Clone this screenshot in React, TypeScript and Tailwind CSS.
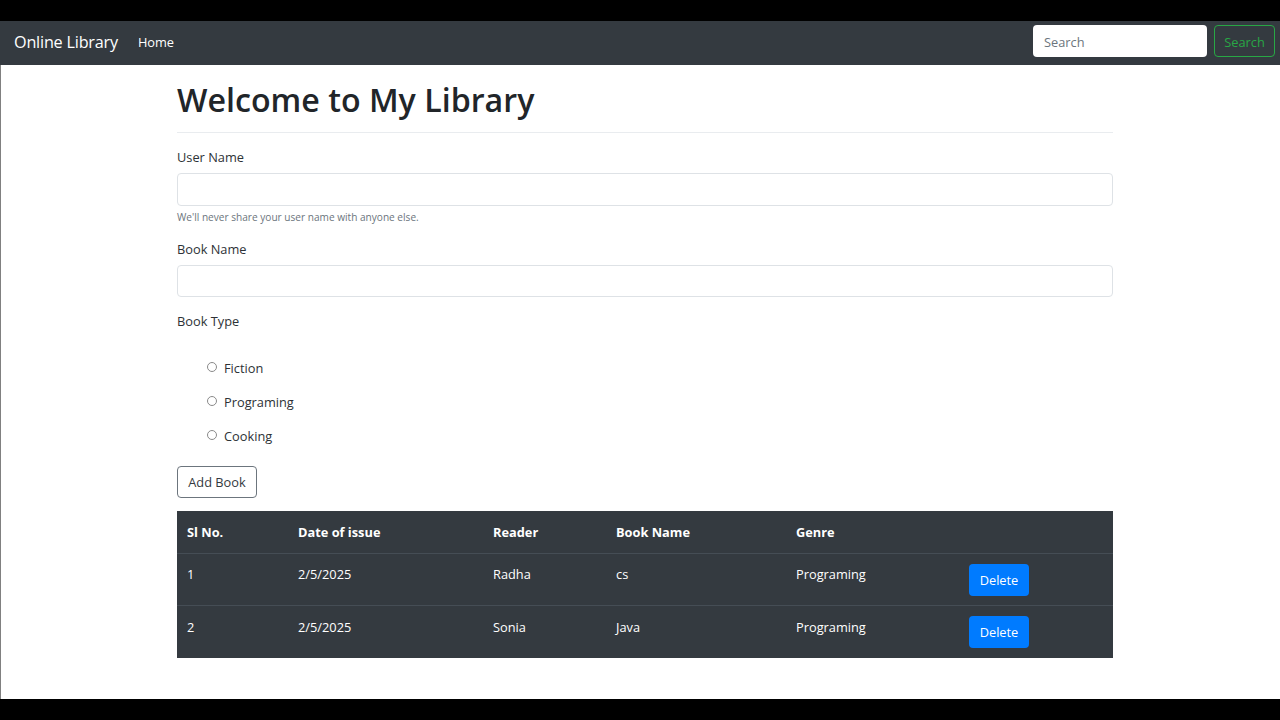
import React from 'react';

const books = [
  { id: 1, date: '2/5/2025', reader: 'Radha', name: 'cs', genre: 'Programing' },
  { id: 2, date: '2/5/2025', reader: 'Sonia', name: 'Java', genre: 'Programing' },
];

const types = ['Fiction', 'Programing', 'Cooking'];

const App: React.FC = () => {
  return (
    <div className="w-[1280px] h-[720px] overflow-hidden bg-black flex flex-col pt-[21px] pb-[21px] font-['Open_Sans','Noto_Sans',sans-serif] text-[#2d3236]">
      {/* Navbar */}
      <nav className="h-[44px] shrink-0 bg-[#343a40] flex items-center pl-[14px] pr-[5px]">
        <span className="text-[16.2px] text-white mr-[20px] mb-[2px] tracking-[-0.2px]">Online Library</span>
        <span className="text-[12.8px] text-white">Home</span>
        <div className="ml-auto flex items-center gap-[7px] mb-[4px]">
          <input
            placeholder="Search"
            className="w-[174px] h-[32px] bg-white rounded-[4px] px-[11px] pt-[2px] text-[12.8px] outline-none placeholder:text-[#6c757d]"
          />
          <button className="w-[61px] h-[32px] pt-[4px] border border-[#28a745] rounded-[4px] text-[12.8px] text-[#28a745]">
            Search
          </button>
        </div>
      </nav>

      {/* Page */}
      <main className="flex-1 bg-white border-l border-[#808080] pl-[176px]">
        <div className="w-[936px]">
          <h1 className="text-[32.2px] leading-[44px] font-semibold text-[#212529] mt-[13px] pb-[10px] border-b border-[#e9ecef]">
            Welcome to My Library
          </h1>

          <label className="block text-[12.8px] leading-[20px] mt-[14px]">User Name</label>
          <input className="block w-full h-[33px] mt-[6px] border border-[#dee2e6] rounded-[4px]" />
          <p className="text-[10.1px] leading-[16px] text-[#6c757d] mt-[3px]">
            We'll never share your user name with anyone else.
          </p>

          <label className="block text-[12.8px] leading-[20px] mt-[14px]">Book Name</label>
          <input className="block w-full h-[32px] mt-[6px] border border-[#dee2e6] rounded-[4px]" />

          <label className="block text-[12.8px] leading-[20px] mt-[14px]">Book Type</label>
          <div className="mt-[27px] pl-[30px] flex flex-col gap-[14px]">
            {types.map(t => (
              <div key={t} className="flex items-center h-[20px]">
                <span className="w-[10px] h-[10px] rounded-full border border-[#8a8a8a] mb-[3px]" />
                <span className="text-[12.8px] leading-[20px] ml-[7px]">{t}</span>
              </div>
            ))}
          </div>

          <button className="block w-[80px] h-[32px] mt-[20px] pt-[1px] border border-[#6c757d] rounded-[4px] text-[12.8px] text-[#343a40]">
            Add Book
          </button>

          {/* Table */}
          <table className="w-full mt-[13px] table-fixed bg-[#343a40] text-white text-[12.8px] border-collapse">
            <colgroup>
              <col className="w-[111px]" />
              <col className="w-[195px]" />
              <col className="w-[123px]" />
              <col className="w-[180px]" />
              <col className="w-[173px]" />
              <col />
            </colgroup>
            <thead>
              <tr className="h-[42px] text-left">
                <th className="px-[10px] pt-[2px] font-bold">Sl No.</th>
                <th className="px-[10px] pt-[2px] font-bold">Date of issue</th>
                <th className="px-[10px] pt-[2px] font-bold">Reader</th>
                <th className="px-[10px] pt-[2px] font-bold">Book Name</th>
                <th className="px-[10px] pt-[2px] font-bold">Genre</th>
                <th />
              </tr>
            </thead>
            <tbody>
              {books.map(b => (
                <tr key={b.id} className="group h-[52px] last:h-[53px] border-t border-[#454d55]">
                  <td className="px-[10px] align-top pt-[11px] group-last:pt-[12px]">{b.id}</td>
                  <td className="px-[10px] align-top pt-[11px] group-last:pt-[12px]">{b.date}</td>
                  <td className="px-[10px] align-top pt-[11px] group-last:pt-[12px]">{b.reader}</td>
                  <td className="px-[10px] align-top pt-[11px] group-last:pt-[12px]">{b.name}</td>
                  <td className="px-[10px] align-top pt-[11px] group-last:pt-[12px]">{b.genre}</td>
                  <td className="px-[10px] align-top pt-[10px]">
                    <button className="w-[60px] h-[32px] pt-[3px] bg-[#007bff] rounded-[4px] text-white">Delete</button>
                  </td>
                </tr>
              ))}
            </tbody>
          </table>
        </div>
      </main>
    </div>
  );
};

export default App;
